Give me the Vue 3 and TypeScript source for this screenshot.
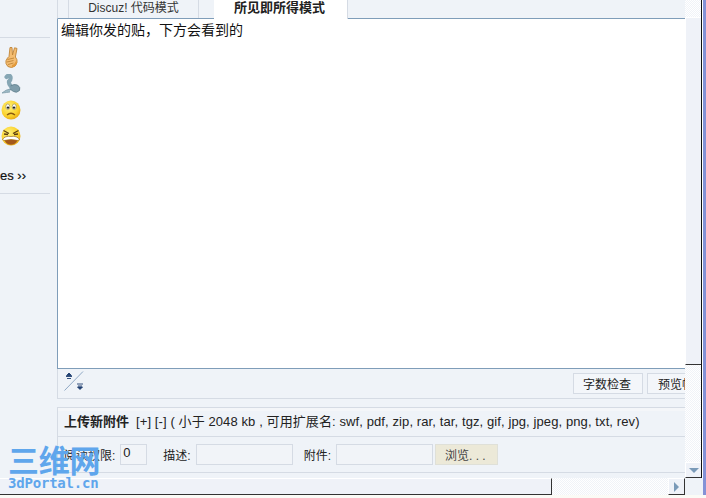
<script setup lang="ts">
const info = '[+] [-] ( 小于 2048 kb , 可用扩展名: swf, pdf, zip, rar, tar, tgz, gif, jpg, jpeg, png, txt, rev)';
</script>

<template>
  <div class="page">
    <div class="main">
      <aside class="side">
        <div class="smilies">
          <svg class="ico hand" viewBox="0 0 13 21" width="13" height="21">
            <path d="M5 .5 L7 .5 L7.5 8 L9.5 .8 L12 1.4 L10.4 10 Q12.6 12.5 12 15.5 Q11 20 6.5 20.5 Q2 20.5 1 16.5 Q.3 13.5 2.5 11 L4 9.5 Z" fill="#f4bd72" stroke="#c08438" stroke-width=".9" />
            <path d="M2.5 12.5 L9 11 M2 15 L8.5 13.5 M3 17.5 L8.5 16" stroke="#c08438" stroke-width=".9" fill="none" />
            <path d="M7 18 Q10 17 11 14 L12 15.5 Q11 20 6.5 20.5 Z" fill="#e39a3c" />
          </svg>
          <svg class="ico phone" viewBox="0 0 20 20" width="20" height="20">
            <path d="M5.5 3 Q8 0 9.5 3 Q10 6 8 7.5 Q7.5 10 10 12.5" fill="none" stroke="#86a6b4" stroke-width="4.2" stroke-linecap="round" />
            <path d="M9.5 12 Q13 9.5 16.5 11 Q20 13.5 18.5 16.5 Q15.5 19.5 12.5 17.5 Q10 15.5 8.5 15.5" fill="#7f9dab" stroke="#5d7c8a" stroke-width=".8" />
            <path d="M9 15 Q5 15.5 1 19 Q6 18.5 9 18" fill="#9dbac6" stroke="#7f9dab" stroke-width=".8" />
          </svg>
          <svg class="ico" viewBox="0 0 20 20" width="20" height="20">
            <defs>
              <radialGradient id="fc" cx=".4" cy=".35" r=".75">
                <stop offset="0" stop-color="#fff27a" /><stop offset=".65" stop-color="#fad02a" /><stop offset="1" stop-color="#e09a10" />
              </radialGradient>
            </defs>
            <circle cx="10" cy="10" r="9.5" fill="url(#fc)" />
            <ellipse cx="6.8" cy="6.8" rx="2" ry="2.8" fill="#fff" stroke="#7a6a30" stroke-width=".5" />
            <ellipse cx="13.2" cy="6.8" rx="2" ry="2.8" fill="#fff" stroke="#7a6a30" stroke-width=".5" />
            <circle cx="7" cy="7.6" r="1.2" fill="#222" /><circle cx="13" cy="7.6" r="1.2" fill="#222" />
            <path d="M6 15 Q10 11.5 14 15" fill="none" stroke="#8a5a10" stroke-width="1.3" />
          </svg>
          <svg class="ico" viewBox="0 0 20 20" width="20" height="20">
            <circle cx="10" cy="10" r="9.5" fill="url(#fc)" />
            <path d="M2.5 4.5 L8 7.5 M17.5 4.5 L12 7.5 M3 8 L7 8.5 M17 8 L13 8.5" stroke="#5a3c10" stroke-width="1.3" fill="none" />
            <path d="M1.5 13.5 Q4 9.5 10 10.5 Q16 9.5 18.5 13.5 L17 14.5 Q10 12.5 3 14.5 Z" fill="#fff" stroke="#8a5a10" stroke-width=".6" />
            <path d="M3.5 14.5 Q10 12.8 16.5 14.5 Q14 18.8 10 18.8 Q6 18.8 3.5 14.5 Z" fill="#a4591c" />
          </svg>
        </div>
        <div class="more">es ››</div>
      </aside>

      <section class="editor">
        <nav class="tabs">
          <div class="tab">Discuz! 代码模式</div>
          <div class="tab active">所见即所得模式</div>
        </nav>
        <div class="area">编辑你发的贴，下方会看到的</div>
        <div class="tools">
          <svg class="resize" viewBox="0 0 20 20" width="20" height="20">
            <path d="M.5 19.5 L19 .5" stroke="#8fa8c4" fill="none" />
            <path d="M2.5 4.5 L5 2 L7.5 4.5 Z M2 5.5 H8 M3 7.5 H7" fill="#1f3f70" stroke="#1f3f70" stroke-width=".9" />
            <path d="M13 13 H19 M14 15 H18 M13.5 16 L16 18.5 L18.5 16 Z" fill="#1f3f70" stroke="#1f3f70" stroke-width=".9" />
          </svg>
          <div class="btns">
            <button class="btn">字数检查</button>
            <button class="btn clip">预览帖子</button>
          </div>
        </div>
        <div class="upload">
          <div class="up-head">
            <b>上传新附件</b>
            <span class="up-info">{{ info }}</span>
          </div>
          <div class="up-row">
            <label>阅读权限:</label>
            <div class="input small">0</div>
            <label class="gap-a">描述:</label>
            <div class="input wide"></div>
            <label class="gap-b">附件:</label>
            <div class="input wide"></div>
            <button class="browse">浏览. . .</button>
          </div>
        </div>
      </section>

      <div class="vbar">
        <div class="track top"></div>
        <div class="thumb"></div>
        <div class="track grow"></div>
        <div class="sbtn down"><i></i></div>
      </div>
      <div class="strip"></div>
    </div>

    <div class="hbar">
      <div class="hthumb"></div>
      <div class="track htrack"></div>
      <div class="sbtn right"><i></i></div>
      <div class="corner"></div>
    </div>
    <div class="bottom"></div>

    <div class="mark">
      <div class="mark-cn">三维网</div>
      <div class="mark-en">3dPortal.cn</div>
    </div>
  </div>
</template>

<style>
html, body { margin: 0; overflow: hidden; }
</style>

<style scoped>
.page {
  position: relative;
  width: 706px;
  height: 498px;
  overflow: hidden;
  background: #eff3f8;
  display: flex;
  flex-direction: column;
  font: 13px "Liberation Sans", "Noto Sans CJK SC", sans-serif;
  color: #222;
}
.main { display: flex; height: 478px; flex: none; }
.side {
  width: 50px;
  margin-right: 7px;
  margin-top: 37px;
  height: 157px;
  box-sizing: border-box;
  border-top: 1px solid #d5dbe4;
  border-bottom: 1px solid #d5dbe4;
  flex: none;
}
.smilies { display: flex; flex-direction: column; align-items: flex-start; width: 24px; margin-top: 9px; padding-left: 1px; }
.ico { display: block; margin-bottom: 6px; }
.hand { margin-left: 4px; }
.more { margin-top: 16px; font-size: 13px; line-height: 16px; color: #111; -webkit-text-stroke: .2px #111; }

.editor { width: 628px; flex: none; display: flex; flex-direction: column; }
.tabs {
  display: flex;
  height: 18px;
  padding-left: 10px;
  gap: 15px;
  border-left: 1px solid #d5dbe4;
  border-bottom: 1px solid #7f9db9;
  box-sizing: content-box;
}
.tab {
  width: 131px; height: 18px;
  text-align: center;
  line-height: 16px;
  font-size: 12px;
  box-sizing: border-box;
  border-left: 1px solid #d5dbe4;
  border-right: 1px solid #d5dbe4;
  color: #333;
}
.tab.active {
  width: 134px; height: 19px;
  padding-right: 2px;
  background: #fff;
  font-size: 13px;
  font-weight: 700;
  border: none;
  border-right: 1px solid #d5dbe4;
  color: #222;
  z-index: 1;
}
.area {
  height: 350px;
  background: #fff;
  box-sizing: border-box;
  border-left: 1px solid #7f9db9;
  border-bottom: 1px solid #7f9db9;
  padding: 3px 3px;
  font-size: 14px;
  line-height: 17px;
  color: #111;
}
.tools {
  height: 30px;
  display: flex;
  justify-content: space-between;
  padding: 0 0 0 6px;
  align-items: flex-start;
  box-sizing: border-box;
  border-left: 1px solid #d5dbe4;
  border-bottom: 1px solid #d5dbe4;
}
.resize { margin-top: 2px; }
.btns { display: flex; gap: 4px; margin-top: 4px; overflow: hidden; }
.btn {
  width: 70px; height: 21px; padding: 0 2px 0 0;
  background: #f3f6fa;
  border: 1px solid #d5dbe4;
  font: 12px "Liberation Sans", "Noto Sans CJK SC", sans-serif;
  color: #222;
}
.btn.clip { width: 38px; border-right: none; text-align: left; padding-left: 10px; overflow: hidden; white-space: nowrap; }
.upload {
  margin-top: 8px;
  height: 66px;
  box-sizing: border-box;
  border-left: 1px solid #d5dbe4;
  border-top: 1px solid #d5dbe4;
  border-bottom: 1px solid #d5dbe4;
}
.up-head {
  height: 29px;
  line-height: 27px;
  padding-left: 6px;
  border-bottom: 1px solid #d5dbe4;
  box-sizing: border-box;
  white-space: nowrap;
  overflow: hidden;
  background: linear-gradient(#f4f6f9 0 3px, transparent 3px);
}
.up-info { margin-left: 7px; letter-spacing: .1px; }
.up-row { display: flex; align-items: center; height: 35px; padding-left: 6px; font-size: 12px; }
.up-row label { margin-right: 5px; white-space: nowrap; }
.gap-a { margin-left: 16px; }
.gap-b { margin-left: 11px; }
.input {
  height: 21px; box-sizing: border-box;
  border: 1px solid #d5dbe4;
  background: #f1f4f8;
  line-height: 16px;
  padding-left: 2px;
  font-size: 13px;
}
.small { width: 27px; }
.wide { width: 97px; }
.browse {
  width: 63px; height: 21px;
  margin-left: 2px;
  background: #ece9d8;
  border: 1px solid #dfe0d8;
  font: 12px "Liberation Sans", "Noto Sans CJK SC", sans-serif;
  color: #444;
  text-align: left;
  padding: 0 0 0 9px;
}

.vbar { width: 16px; flex: none; display: flex; flex-direction: column; border-right: 1px solid #111; }
.track { background: repeating-conic-gradient(#fff 0 25%, #f0f3f8 0 50%) 0 0 / 2px 2px; }
.top { height: 17px; }
.grow { flex: 1; }
.thumb { height: 348px; box-sizing: border-box; background: #eff2f8; border-left: 1px solid #fff; border-bottom: 1px solid #333; border-top: 1px solid #fff; }
.sbtn { box-sizing: border-box; background: #eff2f8; border-left: 1px solid #fff; border-top: 1px solid #fff; border-bottom: 1px solid #333; display: flex; align-items: center; justify-content: center; }
.sbtn.down { height: 16px; }
.sbtn.down i { border: 5px solid transparent; border-top: 5px solid #7a9ab8; border-bottom: none; }
.strip { flex: 1; background: #fff; display: flex; }
.strip::after { content: ""; margin-left: 1px; width: 3px; background: #8492d6; }

.hbar { display: flex; height: 17px; flex: none; }
.hthumb { width: 552px; box-sizing: border-box; background: #eff2f8; border-top: 1px solid #fff; border-right: 1px solid #333; border-bottom: 1px solid #333; }
.htrack { width: 116px; }
.sbtn.right { width: 17px; border-right: 1px solid #333; }
.sbtn.right i { border: 5px solid transparent; border-left: 5px solid #7a9ab8; border-right: none; }
.corner { flex: 1; display: flex; justify-content: flex-end; }
.corner::after { content: ""; width: 3px; background: #8492d6; }
.bottom { flex: 1; background: #fbfbf6; }

.mark {
  position: absolute;
  left: 8px;
  top: 443px;
  color: #5fa6ec;
  pointer-events: none;
}
.mark-cn { font: 700 31px/32px "Noto Sans CJK SC", sans-serif; letter-spacing: -.3px; }
.mark-en { font: 700 14px/16px "DejaVu Sans Mono", monospace; letter-spacing: -.2px; }
</style>
